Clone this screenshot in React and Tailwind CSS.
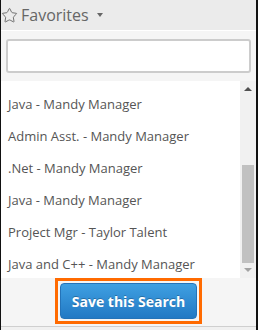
import { Star } from 'lucide-react';

const ITEMS = [
  'Java Candidates - Mandy Manager',
  'Java - Mandy Manager',
  'Admin Asst. - Mandy Manager',
  '.Net - Mandy Manager',
  'Java - Mandy Manager',
  'Project Mgr - Taylor Talent',
  'Java and C++ - Mandy Manager',
];

export default function App() {
  return (
    <div className="w-[258px] h-[330px] bg-[#f0f0f0] font-['Open_Sans',sans-serif] border-l border-r-2 border-[#111] flex flex-col">
      <div className="h-[30px] shrink-0 bg-[#ebebeb] flex items-center text-[#666]">
        <Star size={17} strokeWidth={1.3} className="mr-[3px]" />
        <span className="text-[16px] leading-none">Favorites</span>
        <span className="ml-[8px] w-0 h-0 border-l-[3.5px] border-r-[3.5px] border-t-[4px] border-l-transparent border-r-transparent border-t-[#666]" />
      </div>

      <div className="h-[297px] shrink-0 bg-[#f5f5f5] border-t border-white border-b border-b-[#cfcfcf] flex flex-col">
        <div className="px-[5px] pt-[8px]">
          <input
            type="text"
            className="w-full h-[34px] bg-white border-2 border-[#cccccc] rounded-[3px] outline-none px-2"
          />
        </div>

        <div className="mt-[8px] h-[197px] flex bg-white">
          <div className="flex-1 overflow-hidden">
            <div className="-mt-[24px]">
              {ITEMS.map((t, i) => (
                <div key={i} className="h-[32px] flex items-center pl-[7px] text-[13px] text-[#555] whitespace-nowrap">
                  {t}
                </div>
              ))}
            </div>
          </div>
          <div className="w-[16px] bg-[#f1f1f1] flex flex-col items-center">
            <div className="h-[16px] flex items-center justify-center">
              <span className="w-0 h-0 border-l-[4px] border-r-[4px] border-b-[4px] border-l-transparent border-r-transparent border-b-[#505050]" />
            </div>
            <div className="flex-1 w-full px-[2px] pt-[68px]">
              <div className="h-[98px] bg-[#c1c1c1]" />
            </div>
            <div className="h-[16px] flex items-center justify-center">
              <span className="w-0 h-0 border-l-[4px] border-r-[4px] border-t-[4px] border-l-transparent border-r-transparent border-t-[#a3a3a3]" />
            </div>
          </div>
        </div>

        <div className="flex justify-center">
          <div className="border-[3px] border-[#ff6a00] p-[2px]">
            <button className="w-[137px] h-[36px] rounded-[4px] bg-gradient-to-b from-[#3fa0e2] to-[#2279c4] border border-[#2473b8] text-white font-bold text-[14px] [text-shadow:0_-1px_0_rgba(0,0,0,0.25)]">
              Save this Search
            </button>
          </div>
        </div>
      </div>
    </div>
  );
}
